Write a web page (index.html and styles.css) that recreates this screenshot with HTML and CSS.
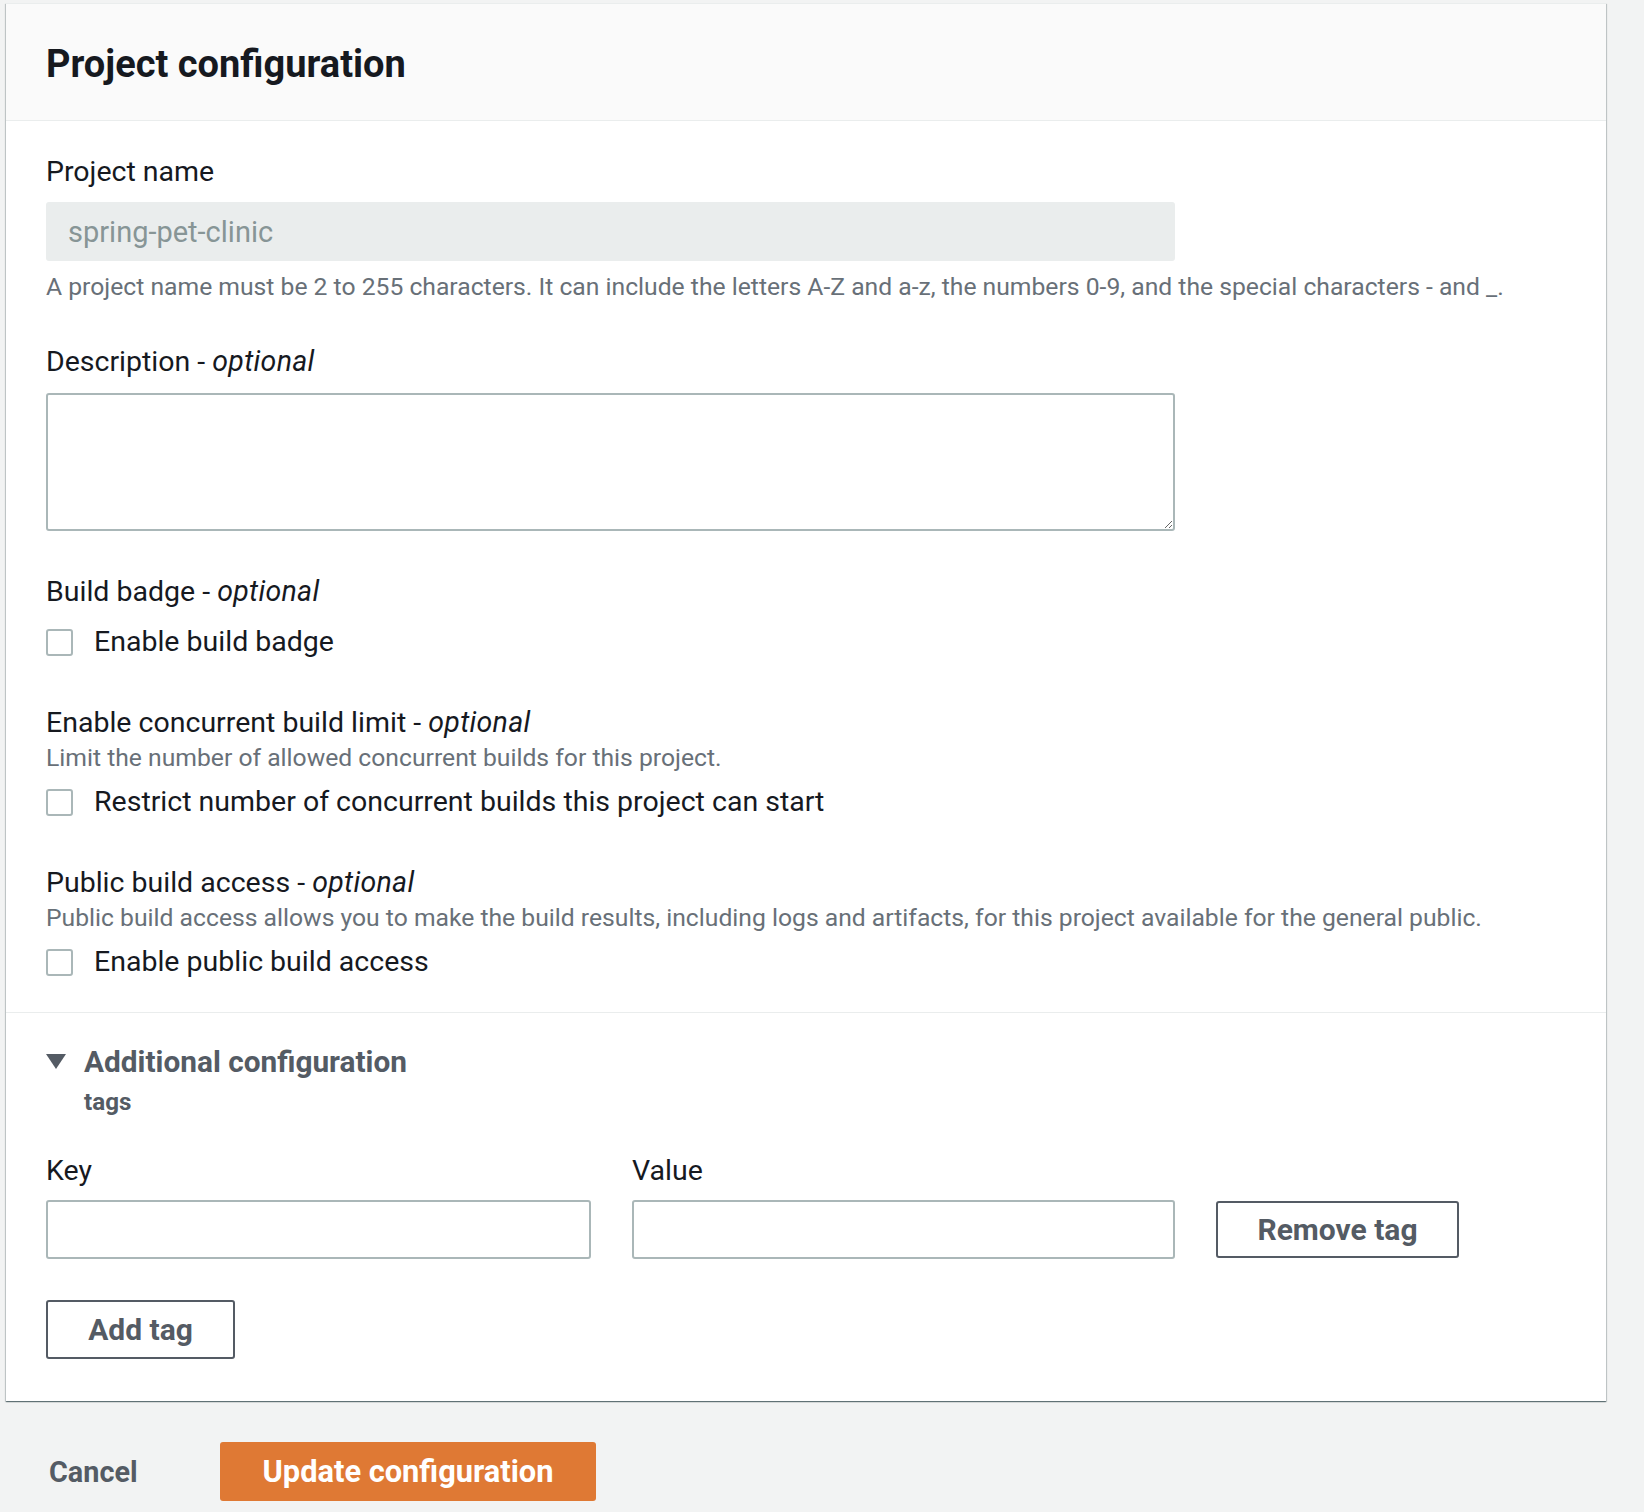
FILE: index.html
```html
<!DOCTYPE html>
<html lang="en">
<head>
<meta charset="utf-8">
<title>Project configuration</title>
<link rel="stylesheet" href="styles.css">
</head>
<body>
<div class="page">
  <div class="card">
    <div class="card-header">
      <h2 class="card-title">Project configuration</h2>
    </div>
    <div class="card-body">
      <div class="field">
        <div class="label">Project name</div>
        <div class="input input-disabled">spring-pet-clinic</div>
        <div class="help">A project name must be 2 to 255 characters. It can include the letters A-Z and a-z, the numbers 0-9, and the special characters - and _.</div>
      </div>
      <div class="field field-gap">
        <div class="label">Description - <i>optional</i></div>
        <textarea class="textarea"></textarea>
      </div>
      <div class="field field-gap">
        <div class="label">Build badge - <i>optional</i></div>
        <label class="check-row check-first"><span class="checkbox"></span><span class="check-text">Enable build badge</span></label>
      </div>
      <div class="field field-gap-lg">
        <div class="label">Enable concurrent build limit - <i>optional</i></div>
        <div class="desc">Limit the number of allowed concurrent builds for this project.</div>
        <label class="check-row"><span class="checkbox"></span><span class="check-text">Restrict number of concurrent builds this project can start</span></label>
      </div>
      <div class="field field-gap-md">
        <div class="label">Public build access - <i>optional</i></div>
        <div class="desc">Public build access allows you to make the build results, including logs and artifacts, for this project available for the general public.</div>
        <label class="check-row"><span class="checkbox"></span><span class="check-text">Enable public build access</span></label>
      </div>
    </div>
    <div class="card-section">
      <div class="expander">
        <span class="caret"></span>
        <span class="expander-title">Additional configuration</span>
      </div>
      <div class="expander-sub">tags</div>
      <div class="tag-row">
        <div class="tag-col tag-key">
          <div class="label">Key</div>
          <div class="input"></div>
        </div>
        <div class="tag-col tag-value">
          <div class="label">Value</div>
          <div class="input"></div>
        </div>
        <button class="btn btn-remove">Remove tag</button>
      </div>
      <button class="btn btn-add">Add tag</button>
    </div>
  </div>
  <div class="footer">
    <button class="link-btn">Cancel</button>
    <button class="btn-primary">Update configuration</button>
  </div>
</div>
</body>
</html>
```

FILE: styles.css
```css
* { box-sizing: border-box; }

html, body {
  margin: 0;
  padding: 0;
  background: #f2f3f3;
}

body {
  font-family: Roboto, "Liberation Sans", sans-serif;
  color: #16191f;
  width: 1644px;
  height: 1512px;
  overflow: hidden;
}

.page {
  padding: 3px 0 0 6px;
}

.card {
  width: 1600px;
  background: #fff;
  box-shadow: 0 1px 1px 0 rgba(0, 28, 36, 0.45), 1px 1px 1px 0 rgba(0, 28, 36, 0.15), -1px 1px 1px 0 rgba(0, 28, 36, 0.15);
  border-top: 1px solid #eaeded;
}

.card-header {
  height: 117px;
  background: #fafafa;
  border-bottom: 1px solid #eaeded;
  padding: 0 40px;
  display: flex;
  align-items: center;
}

.card-title {
  margin: 0;
  font-size: 38px;
  line-height: 44px;
  font-weight: 700;
  color: #16191f;
  margin-top: 4px;
}

.card-body {
  padding: 35px 40px 34px 40px;
  border-bottom: 1px solid #eaeded;
}

.field {
  display: flex;
  flex-direction: column;
  align-items: flex-start;
}

.field-gap { margin-top: 45px; }
.field-gap-lg { margin-top: 49px; }
.field-gap-md { margin-top: 49px; }

.label {
  font-size: 28.5px;
  line-height: 32px;
  color: #16191f;
}

.label i {
  font-style: italic;
  letter-spacing: 0.3px;
}

.input {
  margin-top: 14px;
  width: 1129px;
  height: 59px;
  border: 2px solid #aab7b8;
  border-radius: 3px;
  background: #fff;
}

.input-disabled {
  background: #eaeded;
  border-color: #eaeded;
  color: #879596;
  font-size: 29px;
  line-height: 57px;
  padding: 0 20px;
}

.help {
  margin-top: 12px;
  font-size: 24.7px;
  line-height: 28px;
  color: #687078;
}

.textarea {
  display: block;
  margin-top: 15px;
  width: 1129px;
  height: 138px;
  border: 2px solid #aab7b8;
  border-radius: 3px;
  resize: vertical;
  font-family: inherit;
  background: #fff;
}

.desc {
  margin-top: 5px;
  font-size: 24.7px;
  line-height: 28px;
  color: #687078;
}

.check-row {
  margin-top: 14px;
  display: flex;
  align-items: center;
  height: 32px;
}

.check-first { margin-top: 18px; }

.checkbox {
  width: 27px;
  height: 27px;
  border: 2px solid #aab7b8;
  border-radius: 3px;
  background: #fff;
  flex: none;
}

.check-text {
  margin-left: 21px;
  font-size: 28.5px;
  line-height: 32px;
  color: #16191f;
}

.card-section {
  padding: 32px 40px 42px 40px;
}

.expander {
  display: flex;
  align-items: center;
  height: 32px;
}

.caret {
  width: 0;
  height: 0;
  border-left: 10px solid transparent;
  border-right: 10px solid transparent;
  border-top: 15px solid #545b64;
  margin-right: 18px;
}

.expander-title {
  font-size: 29.8px;
  font-weight: 700;
  color: #545b64;
}

.expander-sub {
  margin-top: 11px;
  margin-left: 38px;
  font-size: 24.2px;
  line-height: 28px;
  font-weight: 700;
  color: #545b64;
}

.tag-row {
  margin-top: 39px;
  display: flex;
  align-items: flex-end;
  gap: 41px;
}

.tag-col .input { width: 545px; margin-top: 13px; }
.tag-value .input { width: 543px; }

.btn {
  font-family: inherit;
  font-weight: 700;
  font-size: 30px;
  color: #545b64;
  background: #fff;
  border: 2px solid #545b64;
  border-radius: 3px;
  height: 57px;
  padding: 0;
  cursor: pointer;
}

.btn-remove { width: 243px; margin-bottom: 1px; }

.btn-add {
  display: block;
  margin-top: 41px;
  width: 189px;
  height: 59px;
}

.footer {
  display: flex;
  align-items: center;
  margin-top: 41px;
  padding-left: 43px;
}

.link-btn {
  font-family: inherit;
  font-weight: 700;
  font-size: 28.8px;
  color: #545b64;
  background: transparent;
  border: 0;
  padding: 0;
  width: 171px;
  text-align: left;
  cursor: pointer;
}

.btn-primary {
  width: 376px;
  height: 59px;
  background: #df7934;
  color: #fff;
  border: 0;
  border-radius: 3px;
  font-family: inherit;
  font-weight: 700;
  font-size: 30.8px;
  cursor: pointer;
}
```
